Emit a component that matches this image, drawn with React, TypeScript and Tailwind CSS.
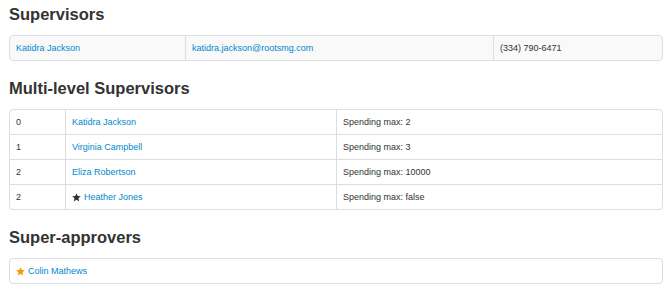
import React from 'react';

type Level = { level: number; name: string; max: string; starred?: boolean };

const levels: Level[] = [
  { level: 0, name: 'Katidra Jackson', max: '2' },
  { level: 1, name: 'Virginia Campbell', max: '3' },
  { level: 2, name: 'Eliza Robertson', max: '10000' },
  { level: 2, name: 'Heather Jones', max: 'false', starred: true },
];

function Star({ color }: { color: string }) {
  return (
    <svg width="9" height="9" viewBox="1 1.5 22 21" className="inline-block mr-[3px] -mt-[2px] shrink-0">
      <polygon
        points="12,1.5 15.1,8.4 22.6,9.1 16.9,14.1 18.6,21.5 12,17.6 5.4,21.5 7.1,14.1 1.4,9.1 8.9,8.4"
        fill={color}
      />
    </svg>
  );
}

function Heading({ children, first }: { children: React.ReactNode; first?: boolean }) {
  return (
    <h3 className={`text-[16.5px] leading-[20px] font-bold text-[#333] mb-[11px] ${first ? 'mt-0' : 'mt-[17px]'}`}>
      {children}
    </h3>
  );
}

const cell = 'h-[24px] flex items-center px-[6px] pt-[2px]';
const link = 'text-[#0088cc] hover:underline';

export default function App() {
  return (
    <div
      className="pt-[4px] pl-[9px] pr-[7px] pb-4 bg-white text-[#333] text-[9px]"
      style={{ fontFamily: '"Liberation Sans", Arial, sans-serif' }}
    >
      <Heading first>Supervisors</Heading>
      <div className="border border-[#ddd] rounded-[4px] bg-[#f9f9f9] grid grid-cols-[175px_308px_1fr]">
        <div className={cell}>
          <a href="#" className={link}>Katidra Jackson</a>
        </div>
        <div className={`${cell} border-l border-[#ddd]`}>
          <a href="#" className={link}>katidra.jackson@rootsmg.com</a>
        </div>
        <div className={`${cell} border-l border-[#ddd]`}>(334) 790-6471</div>
      </div>

      <Heading>Multi-level Supervisors</Heading>
      <div className="border border-[#ddd] rounded-[4px]">
        {levels.map((l, i) => (
          <div
            key={i}
            className={`grid grid-cols-[55px_271px_1fr] ${i > 0 ? 'border-t border-[#ddd]' : ''}`}
          >
            <div className={cell}>{l.level}</div>
            <div className={`${cell} border-l border-[#ddd]`}>
              {l.starred && <Star color="#333" />}
              <a href="#" className={link}>{l.name}</a>
            </div>
            <div className={`${cell} border-l border-[#ddd]`}>Spending max: {l.max}</div>
          </div>
        ))}
      </div>

      <Heading>Super-approvers</Heading>
      <div className="border border-[#ddd] rounded-[4px]">
        <div className={cell}>
          <Star color="#f89406" />
          <a href="#" className={link}>Colin Mathews</a>
        </div>
      </div>
    </div>
  );
}
